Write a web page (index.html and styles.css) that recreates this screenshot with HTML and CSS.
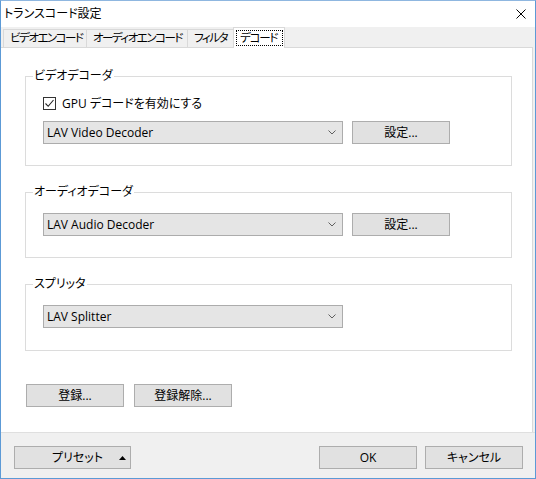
FILE: index.html
```html
<!DOCTYPE html>
<html lang="ja">
<head>
<meta charset="utf-8">
<title>トランスコード設定</title>
<link rel="stylesheet" href="styles.css">
</head>
<body>
<div class="window">
  <div class="titlebar">
    <span class="title">トランスコード設定</span>
    <svg class="close" width="10" height="10" viewBox="0 0 10 10"><path d="M0.5 0.5L9.5 9.5M9.5 0.5L0.5 9.5" stroke="#000" stroke-width="1" fill="none"/></svg>
  </div>
  <div class="tabs">
    <div class="tab t1">ビデオエンコード</div>
    <div class="tab t2">オーディオエンコード</div>
    <div class="tab t3">フィルタ</div>
    <div class="tab active"><span class="focus">デコード</span></div>
  </div>
  <div class="panel">
    <fieldset class="group g1">
      <legend>ビデオデコーダ</legend>
      <div class="check">
        <span class="box"><svg width="11" height="11" viewBox="0 0 11 11"><path d="M1.5 5.5L4.2 8.3L9.5 2" stroke="#222" stroke-width="1.1" fill="none"/></svg></span>
        <span>GPU デコードを有効にする</span>
      </div>
      <div class="row">
        <div class="combo"><span>LAV Video Decoder</span><svg class="chev" width="8" height="5" viewBox="0 0 8 5"><path d="M0.5 0.5L4 4L7.5 0.5" stroke="#606060" fill="none"/></svg></div>
        <div class="btn">設定...</div>
      </div>
    </fieldset>
    <fieldset class="group g2">
      <legend>オーディオデコーダ</legend>
      <div class="row">
        <div class="combo"><span>LAV Audio Decoder</span><svg class="chev" width="8" height="5" viewBox="0 0 8 5"><path d="M0.5 0.5L4 4L7.5 0.5" stroke="#606060" fill="none"/></svg></div>
        <div class="btn">設定...</div>
      </div>
    </fieldset>
    <fieldset class="group g3">
      <legend>スプリッタ</legend>
      <div class="row">
        <div class="combo"><span>LAV Splitter</span><svg class="chev" width="8" height="5" viewBox="0 0 8 5"><path d="M0.5 0.5L4 4L7.5 0.5" stroke="#606060" fill="none"/></svg></div>
      </div>
    </fieldset>
    <div class="reg">
      <div class="btn">登録...</div>
      <div class="btn">登録解除...</div>
    </div>
  </div>
  <div class="footer">
    <div class="btn preset"><span class="ptext">プリセット</span><svg class="tri" width="7" height="4" viewBox="0 0 7 4"><path d="M0 4L3.5 0L7 4Z" fill="#000"/></svg></div>
    <div class="spacer"></div>
    <div class="btn">OK</div>
    <div class="btn">キャンセル</div>
  </div>
</div>
</body>
</html>
```
FILE: styles.css
```css
* { box-sizing: border-box; }
html, body { margin: 0; padding: 0; background: #fff; }
body {
  font-family: "Open Sans", "Noto Sans CJK JP", sans-serif;
  font-size: 12px;
  color: #000;
  font-feature-settings: "palt";
}
.window {
  width: 536px;
  height: 479px;
  border: 1px solid #5c9ad6;
  border-top-color: #8fb7e0;
  background: #f0f0f0;
  display: flex;
  flex-direction: column;
  overflow: hidden;
}
.titlebar {
  height: 26px;
  background: #fff;
  display: flex;
  align-items: center;
  padding: 0 9px 0 3px;
}
.title { flex: 1; line-height: 16px; }
.close { display: block; }
.tabs {
  height: 20px;
  display: flex;
  align-items: flex-end;
  padding-left: 2px;
  background: #f0f0f0;
  position: relative;
  z-index: 1;
}
.tab {
  flex-shrink: 0;
  height: 18px;
  border: 1px solid #d9d9d9;
  border-bottom: none;
  border-right: none;
  background: #f0f0f0;
  line-height: 16px;
  padding: 0 0 0 6px;
  white-space: nowrap;
  font-size: 11.5px;
  letter-spacing: -1.5px;
}
.t1 { width: 83px; }
.t2 { width: 101px; }
.t3 { width: 47px; border-right: 1px solid #d9d9d9; }
.tab.active {
  width: 52px;
  height: 21px;
  margin-bottom: -1px;
  background: #fff;
  border-right: 1px solid #d9d9d9;
  padding: 2px 1px 0 2px;
  margin-left: -1px;
  letter-spacing: -1.2px;
}
.focus {
  display: block;
  height: 16px;
  border: 1px dotted #000;
  line-height: 14px;
  padding: 0 0 0 3px;
}
.panel {
  flex: 1;
  background: #fff;
  border-top: 1px solid #d9d9d9;
  border-right: 1px solid #d9d9d9;
  margin-right: 2px;
  padding: 20px 20px 0 24px;
  display: flex;
  flex-direction: column;
}
.group {
  margin: 0;
  border: 1px solid #dcdcdc;
  padding: 0 0 21px 17px;
  min-width: 0;
}
.g3 { padding-bottom: 22px; }
.group + .group { margin-top: 18px; }
legend {
  margin-left: -10px;
  padding: 0 1px;
  line-height: 16px;
}
.check {
  margin-top: 13px;
  display: flex;
  align-items: center;
  height: 13px;
  line-height: 13px;
}
.box {
  width: 13px;
  height: 13px;
  border: 1px solid #333;
  background: #fff;
  margin-right: 6px;
  display: flex;
}
.box svg { display: block; }
.row {
  display: flex;
  gap: 9px;
  margin-top: 13px;
}
.g1 .row { margin-top: 11px; }
.combo {
  width: 300px;
  height: 23px;
  background: #e5e5e5;
  border: 1px solid #acacac;
  display: flex;
  align-items: center;
  justify-content: space-between;
  padding: 0 6px 0 3px;
  line-height: 16px;
}
.chev { display: block; }
.btn {
  width: 98px;
  height: 23px;
  background: #e1e1e1;
  border: 1px solid #adadad;
  display: flex;
  align-items: center;
  justify-content: center;
  line-height: 16px;
}
.reg {
  display: flex;
  gap: 10px;
  margin-top: 33px;
  margin-left: 1px;
}
.footer {
  height: 46px;
  border-top: 1px solid #dfdfdf;
  background: #f0f0f0;
  display: flex;
  align-items: flex-start;
  gap: 8px;
  padding: 13px 12px 0 13px;
}
.footer .spacer { flex: 1; }
.preset {
  width: 117px;
  justify-content: flex-start;
  padding-left: 37px;
}
.ptext { width: 67px; }
.tri { display: block; }
```
